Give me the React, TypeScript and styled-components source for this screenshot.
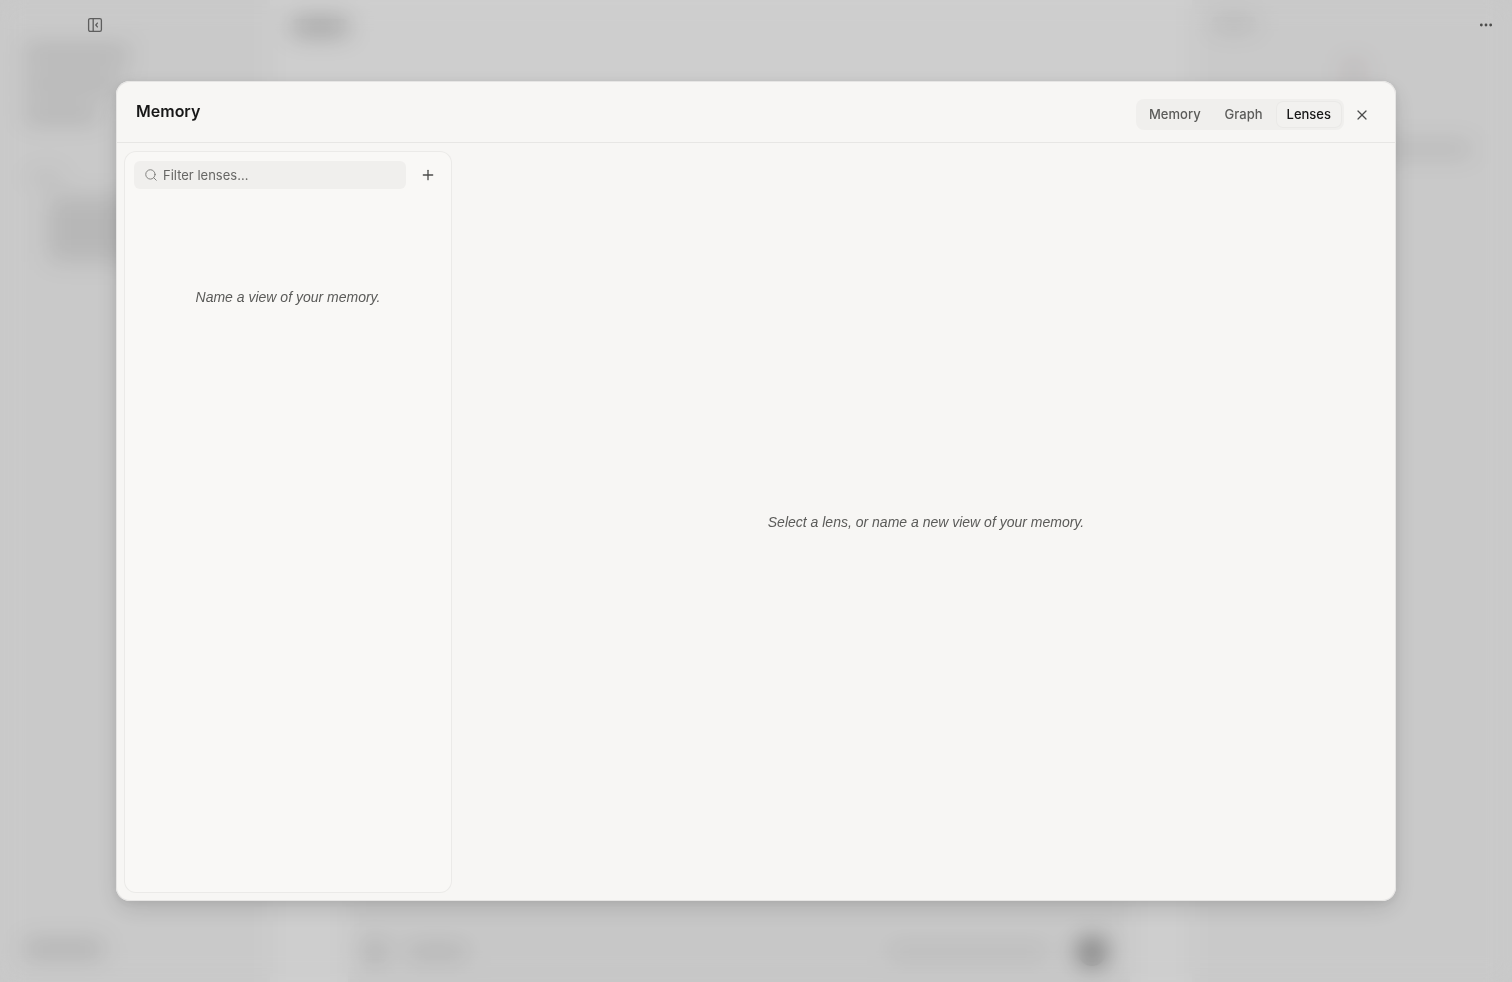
import React, { useState } from "react";
import styled, { createGlobalStyle } from "styled-components";
import { Ellipsis, Plus, Search, X } from "lucide-react";

const GlobalStyle = createGlobalStyle`
  * { box-sizing: border-box; }
  body {
    margin: 0;
    background: #f9f9f9;
    color: #171717;
    font-family: Inter, "Liberation Sans", sans-serif;
    font-size: 14px;
    line-height: 20px;
  }
  button, input { font: inherit; color: inherit; }
`;

const Workspace = styled.div`
  display: grid;
  grid-template-columns: 270px minmax(0, 1fr) 320px;
  height: 100vh;
  overflow: hidden;
`;

const Sidebar = styled.aside`
  display: flex;
  flex-direction: column;
  padding: 46px 24px 24px;
  background: #f8f8f8;
`;

const Inspector = styled.aside`
  display: flex;
  flex-direction: column;
  padding: 17px 40px 24px 20px;
  background: #f8f8f8;
`;

const Main = styled.main`
  display: flex;
  flex-direction: column;
  justify-content: space-between;
  padding: 19px 62px 0 22px;
  background: #fefefe;
`;

const Bar = styled.div<{ $w: number; $h?: number; $tone?: string; $mt?: number; $ml?: number }>`
  flex: none;
  width: ${(p) => p.$w}px;
  height: ${(p) => p.$h ?? 16}px;
  margin-top: ${(p) => p.$mt ?? 0}px;
  margin-left: ${(p) => p.$ml ?? 0}px;
  border-radius: 4px;
  background: ${(p) => p.$tone ?? "#dadada"};
`;

const Spacer = styled.div`
  flex: 1;
`;

const Composer = styled.div`
  display: flex;
  align-items: center;
  gap: 30px;
  height: 92px;
  margin-left: 56px;
  padding: 32px 24px 0 16px;
  background: #f6f6f6;
`;

const SendDot = styled.div`
  width: 28px;
  height: 28px;
  border-radius: 50%;
  background: #8a8a8a;
`;

const Overlay = styled.div`
  position: fixed;
  inset: 0;
  display: grid;
  place-items: center;
  padding: 24px;
  background: rgba(0, 0, 0, 0.19);
  backdrop-filter: blur(12px);
`;

const WindowBar = styled.div`
  position: fixed;
  inset: 0 0 auto;
  display: flex;
  justify-content: space-between;
  padding: 11px 12px 0 81px;
`;

const IconButton = styled.button`
  display: grid;
  place-items: center;
  flex: none;
  width: 28px;
  height: 28px;
  padding: 0;
  border: 0;
  border-radius: 6px;
  background: transparent;
  color: #4c4c4b;
  cursor: pointer;
`;

const Dialog = styled.section`
  display: flex;
  flex-direction: column;
  width: 100%;
  max-width: 1280px;
  height: 100%;
  max-height: 820px;
  border-radius: 14px;
  background: #f7f6f4;
  box-shadow: inset 0 0 0 1px #e6e5e4, 0 8px 24px rgba(0, 0, 0, 0.12), 0 2px 8px rgba(0, 0, 0, 0.08);
`;

const Header = styled.header`
  display: flex;
  align-items: flex-start;
  justify-content: space-between;
  height: 62px;
  flex: none;
  padding: 18px 20px 0;
  border-bottom: 1px solid #e7e6e4;
`;

const Title = styled.h1`
  margin: 0;
  font-size: 16px;
  font-weight: 600;
  line-height: 24px;
`;

const Actions = styled.div`
  display: flex;
  align-items: center;
  gap: 4px;
`;

const Tabs = styled.div`
  display: flex;
  gap: 2px;
  padding: 2px;
  border-radius: 8px;
  background: #f0efed;
`;

const Tab = styled.button<{ $active: boolean }>`
  height: 27px;
  padding: 0 11px 2px;
  border: 0;
  border-radius: 7px;
  background: ${(p) => (p.$active ? "#f2f1ef" : "transparent")};
  box-shadow: ${(p) => (p.$active ? "inset 0 0 0 1px #eae9e7" : "none")};
  color: ${(p) => (p.$active ? "#171717" : "#5b5b59")};
  font-size: 13px;
  font-weight: 500;
  cursor: pointer;
`;

const Body = styled.div`
  display: flex;
  flex: 1;
  gap: 4px;
  min-height: 0;
  padding: 8px 0 8px 8px;
`;

const LensPanel = styled.nav`
  flex: none;
  width: 328px;
  padding: 10px;
  border-radius: 12px;
  background: #f9f8f6;
  box-shadow: inset 0 0 0 1px #ebeae8;
`;

const FilterRow = styled.div`
  display: flex;
  gap: 8px;
`;

const FilterField = styled.label`
  display: flex;
  align-items: center;
  flex: 1;
  gap: 5px;
  min-width: 0;
  height: 28px;
  padding: 0 10px;
  border-radius: 6px;
  background: #f0efed;
  color: #7b7b79;
`;

const FilterInput = styled.input`
  flex: 1;
  min-width: 0;
  padding: 0;
  border: 0;
  outline: 0;
  background: transparent;
  color: #171717;
  font-size: 13px;
  &::placeholder { color: #666664; opacity: 1; }
`;

const Hint = styled.p`
  margin: 0;
  color: #5b5b59;
  font-family: "Liberation Sans", sans-serif;
  font-style: italic;
  text-align: center;
`;

const LensList = styled.div`
  padding-top: 98px;
`;

const Detail = styled.div`
  display: grid;
  flex: 1;
  place-items: center;
`;

const CollapseIcon = () => (
  <svg width="16" height="16" viewBox="0 0 16 16" fill="none" stroke="#5e5e5e" strokeWidth="1.3" strokeLinecap="round" strokeLinejoin="round" aria-hidden="true">
    <rect x="1.6" y="1.6" width="12.8" height="12.8" rx="1.6" />
    <path d="M6.2 1.6v12.8M10.4 6.1 8.8 8l1.6 1.9" />
  </svg>
);

const tabs = ["Memory", "Graph", "Lenses"];

export default function App() {
  const [active, setActive] = useState("Lenses");
  const [filter, setFilter] = useState("");

  return (
    <>
      <GlobalStyle />
      <Workspace aria-hidden="true">
        <Sidebar>
          <Bar $w={106} />
          <Bar $w={100} $mt={14} />
          <Bar $w={76} $mt={14} />
          <Bar $w={36} $mt={50} $h={10} $tone="#e4e4e4" $ml={4} />
          <Bar $w={130} $mt={14} $h={66} $ml={24} $tone="#e2e2e2" />
          <Spacer />
          <Bar $w={80} $h={18} />
        </Sidebar>
        <Main>
          <Bar $w={56} $tone="#c2c2c2" />
          <Composer>
            <Bar $w={22} $h={22} />
            <Bar $w={62} $ml={-10} $tone="#dedede" />
            <Spacer />
            <Bar $w={160} $tone="#e6e6e6" />
            <SendDot />
          </Composer>
        </Main>
        <Inspector>
          <Bar $w={44} $h={14} $tone="#e0e0e0" />
          <Bar $w={22} $h={20} $mt={30} $ml={131} $tone="#e6dfe0" />
          <Bar $w={100} $mt={60} $ml={160} $tone="#e3e3e3" />
        </Inspector>
      </Workspace>
      <Overlay>
        <Dialog role="dialog" aria-modal="true" aria-labelledby="dialog-title">
          <Header>
            <Title id="dialog-title">Memory</Title>
            <Actions>
              <Tabs role="tablist">
                {tabs.map((name) => (
                  <Tab key={name} type="button" role="tab" aria-selected={active === name} $active={active === name} onClick={() => setActive(name)}>
                    {name}
                  </Tab>
                ))}
              </Tabs>
              <IconButton type="button" aria-label="Close">
                <X size={16} strokeWidth={1.8} />
              </IconButton>
            </Actions>
          </Header>
          <Body>
            <LensPanel aria-label="Lenses">
              <FilterRow>
                <FilterField>
                  <Search size={14} strokeWidth={1.6} />
                  <FilterInput type="text" aria-label="Filter lenses" placeholder="Filter lenses…" value={filter} onChange={(e) => setFilter(e.target.value)} />
                </FilterField>
                <IconButton type="button" aria-label="New lens">
                  <Plus size={16} strokeWidth={2} />
                </IconButton>
              </FilterRow>
              <LensList>
                <Hint>Name a view of your memory.</Hint>
              </LensList>
            </LensPanel>
            <Detail>
              <Hint>Select a lens, or name a new view of your memory.</Hint>
            </Detail>
          </Body>
        </Dialog>
      </Overlay>
      <WindowBar>
        <IconButton type="button" aria-label="Collapse sidebar">
          <CollapseIcon />
        </IconButton>
        <IconButton type="button" aria-label="More options">
          <Ellipsis size={16} strokeWidth={2.2} />
        </IconButton>
      </WindowBar>
    </>
  );
}
